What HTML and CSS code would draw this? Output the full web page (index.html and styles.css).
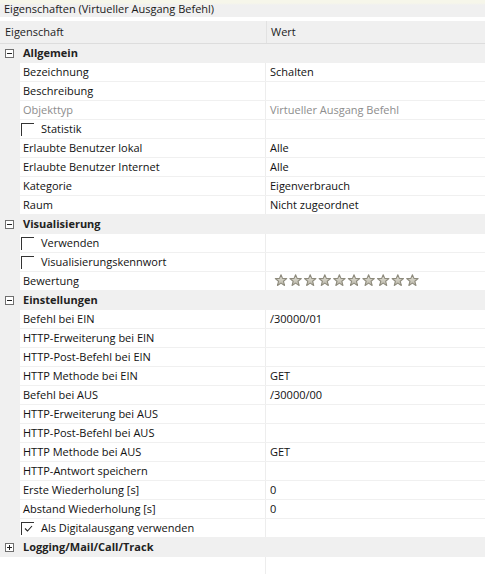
FILE: index.html
```html
<!DOCTYPE html>
<html lang="de">
<head>
<meta charset="utf-8">
<title>Eigenschaften</title>
<link rel="stylesheet" href="styles.css">
</head>
<body>
<div class="title">Eigenschaften (Virtueller Ausgang Befehl)</div>
<div class="header"><div class="hcell">Eigenschaft</div><div class="hcell hval">Wert</div></div>
<div class="grid">
  <div class="group"><span class="gut"><span class="toggle"><span class="h"></span></span></span><span class="gname">Allgemein</span></div>
  <div class="row"><span class="gut"></span><span class="name">Bezeichnung</span><span class="value">Schalten</span></div>
  <div class="row"><span class="gut"></span><span class="name">Beschreibung</span><span class="value"></span></div>
  <div class="row dis"><span class="gut"></span><span class="name">Objekttyp</span><span class="value">Virtueller Ausgang Befehl</span></div>
  <div class="row"><span class="gut"></span><span class="name cb"><span class="box"></span>Statistik</span><span class="value"></span></div>
  <div class="row"><span class="gut"></span><span class="name">Erlaubte Benutzer lokal</span><span class="value">Alle</span></div>
  <div class="row"><span class="gut"></span><span class="name">Erlaubte Benutzer Internet</span><span class="value">Alle</span></div>
  <div class="row"><span class="gut"></span><span class="name">Kategorie</span><span class="value">Eigenverbrauch</span></div>
  <div class="row"><span class="gut"></span><span class="name">Raum</span><span class="value">Nicht zugeordnet</span></div>
  <div class="group"><span class="gut"><span class="toggle"><span class="h"></span></span></span><span class="gname">Visualisierung</span></div>
  <div class="row"><span class="gut"></span><span class="name cb"><span class="box"></span>Verwenden</span><span class="value"></span></div>
  <div class="row"><span class="gut"></span><span class="name cb"><span class="box"></span>Visualisierungskennwort</span><span class="value"></span></div>
  <div class="row"><span class="gut"></span><span class="name">Bewertung</span><span class="value">
    <svg class="stars" width="150" height="14" viewBox="0 0 150 14">
      <defs>
        <linearGradient id="sg" x1="0" y1="0" x2="0" y2="1">
          <stop offset="0" stop-color="#e4e2d8"/>
          <stop offset="1" stop-color="#b9b6a8"/>
        </linearGradient>
        <polygon id="st" points="6,0.8 7.53,4.4 11.7,4.65 8.47,7.3 9.53,11.5 6,9.1 2.47,11.5 3.53,7.3 0.3,4.65 4.47,4.4" fill="url(#sg)" stroke="#8e8b7d" stroke-width="1.1" stroke-linejoin="round"/>
      </defs>
      <use href="#st" x="4"/>
      <use href="#st" x="18.6"/>
      <use href="#st" x="33.2"/>
      <use href="#st" x="47.8"/>
      <use href="#st" x="62.4"/>
      <use href="#st" x="77"/>
      <use href="#st" x="91.6"/>
      <use href="#st" x="106.2"/>
      <use href="#st" x="120.8"/>
      <use href="#st" x="135.4"/>
    </svg></span></div>
  <div class="group"><span class="gut"><span class="toggle"><span class="h"></span></span></span><span class="gname">Einstellungen</span></div>
  <div class="row"><span class="gut"></span><span class="name">Befehl bei EIN</span><span class="value">/30000/01</span></div>
  <div class="row"><span class="gut"></span><span class="name">HTTP-Erweiterung bei EIN</span><span class="value"></span></div>
  <div class="row"><span class="gut"></span><span class="name">HTTP-Post-Befehl bei EIN</span><span class="value"></span></div>
  <div class="row"><span class="gut"></span><span class="name">HTTP Methode bei EIN</span><span class="value">GET</span></div>
  <div class="row"><span class="gut"></span><span class="name">Befehl bei AUS</span><span class="value">/30000/00</span></div>
  <div class="row"><span class="gut"></span><span class="name">HTTP-Erweiterung bei AUS</span><span class="value"></span></div>
  <div class="row"><span class="gut"></span><span class="name">HTTP-Post-Befehl bei AUS</span><span class="value"></span></div>
  <div class="row"><span class="gut"></span><span class="name">HTTP Methode bei AUS</span><span class="value">GET</span></div>
  <div class="row"><span class="gut"></span><span class="name">HTTP-Antwort speichern</span><span class="value"></span></div>
  <div class="row"><span class="gut"></span><span class="name">Erste Wiederholung [s]</span><span class="value">0</span></div>
  <div class="row"><span class="gut"></span><span class="name">Abstand Wiederholung [s]</span><span class="value">0</span></div>
  <div class="row"><span class="gut"></span><span class="name cb"><span class="box checked"><svg width="9" height="8" viewBox="0 0 9 8"><polyline points="1,3.5 3.5,6 8,1" fill="none" stroke="#222" stroke-width="1.1"/></svg></span>Als Digitalausgang verwenden</span><span class="value"></span></div>
  <div class="group"><span class="gut"><span class="toggle"><span class="h"></span><span class="v"></span></span></span><span class="gname">Logging/Mail/Call/Track</span></div>
</div>
<div class="filler"><span class="fl"></span></div>
</body>
</html>
```

FILE: styles.css
```css
html, body {
  margin: 0;
  padding: 0;
  background: #ffffff;
}
body {
  font-family: "Open Sans", "Noto Sans", sans-serif;
  font-size: 11px;
  color: #111;
  width: 485px;
  height: 574px;
  overflow: hidden;
}
.title {
  height: 17px;
  line-height: 17px;
  padding-left: 4px;
  color: #1a1a1a;
  background: linear-gradient(#f6f6ea 0, #f6f6ea 3px, #f0f0f0 5px, #f0f0f0 100%);
  white-space: nowrap;
}
.header {
  margin-top: 4px;
  height: 22px;
  display: grid;
  grid-template-columns: 266px 1fr;
  background: #f0f0f0;
  border-bottom: 1px solid #dddddd;
  color: #222;
}
.hcell {
  line-height: 22px;
  padding-left: 5px;
}
.hval {
  border-left: 1px solid #e2e2e2;
  padding-left: 4px;
}
.grid {
  display: flex;
  flex-direction: column;
}
.row {
  display: grid;
  grid-template-columns: 20px 246px 1fr;
  height: 18px;
  line-height: 18px;
  border-bottom: 1px solid #f0f0f0;
  white-space: nowrap;
}
.gut {
  background: #f0f0f0;
  display: flex;
  align-items: center;
  justify-content: flex-start;
}
.name {
  padding-left: 3px;
  border-right: 1px solid #ededed;
  overflow: hidden;
}
.name.cb {
  padding-left: 1px;
  display: flex;
  align-items: center;
}
.value {
  padding-left: 4px;
  display: flex;
  align-items: center;
}
.dis .name, .dis .value {
  color: #8d8d8d;
}
.box {
  width: 13px;
  height: 13px;
  box-sizing: border-box;
  border-top: 1px solid #333;
  border-left: 1px solid #333;
  margin-right: 7px;
  flex: none;
  display: flex;
  align-items: center;
  justify-content: center;
}
.box svg {
  display: block;
  margin-top: 1px;
}
.stars {
  display: block;
  margin-left: 1px;
}
.group {
  display: grid;
  grid-template-columns: 20px 1fr;
  height: 18px;
  line-height: 18px;
  background: #f0f0f0;
  border-bottom: 1px solid #f0f0f0;
  white-space: nowrap;
}
.gname {
  font-weight: bold;
  padding-left: 3px;
  color: #222;
}
.toggle {
  position: relative;
  width: 9px;
  height: 9px;
  box-sizing: border-box;
  border: 1px solid #6f6f6f;
  margin-left: 5px;
  background: #fff;
}
.toggle .h {
  position: absolute;
  left: 1px;
  top: 3px;
  width: 5px;
  height: 1px;
  background: #222;
}
.toggle .v {
  position: absolute;
  left: 3px;
  top: 1px;
  width: 1px;
  height: 5px;
  background: #222;
}
.filler {
  height: 40px;
  display: grid;
  grid-template-columns: 266px 1fr;
}
.fl {
  border-right: 1px solid #ededed;
}
```
